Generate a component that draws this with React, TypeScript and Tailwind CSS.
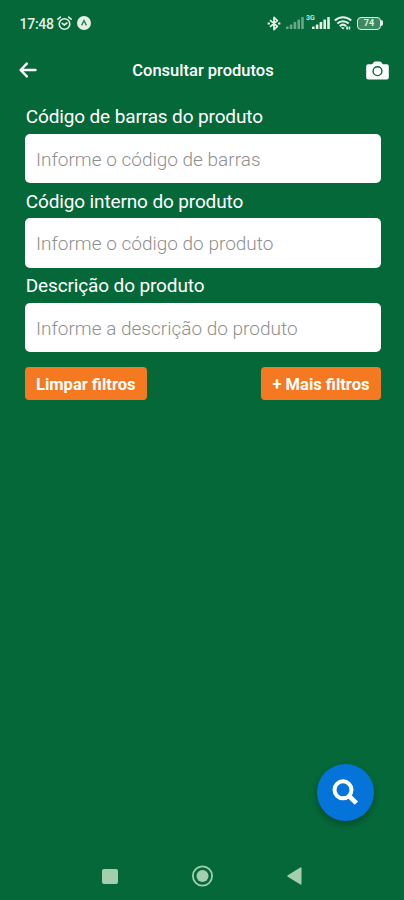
import type { ReactElement } from "react";

const fields = [
  {
    id: "barcode",
    label: "Código de barras do produto",
    placeholder: "Informe o código de barras",
  },
  {
    id: "code",
    label: "Código interno do produto",
    placeholder: "Informe o código do produto",
  },
  {
    id: "description",
    label: "Descrição do produto",
    placeholder: "Informe a descrição do produto",
  },
];

function Signal({ className }: { className: string }): ReactElement {
  return (
    <svg width="18" height="12" viewBox="0 0 18 12" fill="currentColor" className={className}>
      <rect x="0" y="9.5" width="2.6" height="2.5" rx="0.6" />
      <rect x="3.8" y="7.5" width="2.6" height="4.5" rx="0.6" />
      <rect x="7.6" y="5" width="2.6" height="7" rx="0.6" />
      <rect x="11.4" y="2.5" width="2.6" height="9.5" rx="0.6" />
      <rect x="15.2" y="0" width="2.6" height="12" rx="0.6" />
    </svg>
  );
}

function StatusBar(): ReactElement {
  return (
    <div className="flex h-[46px] items-center justify-between pl-[19.5px] pr-[21px] text-[#e4f1e6]">
      <div className="flex items-center">
        <span className="w-[37.5px] whitespace-nowrap pt-px text-[14px] font-medium leading-none tracking-[-0.25px]">
          17:48
        </span>
        <svg width="15" height="15" viewBox="0 0 15 15" fill="none" stroke="currentColor" strokeWidth="1.6" strokeLinecap="round">
          <circle cx="7.5" cy="8" r="5.3" />
          <path d="M.9 3.2 3.3 1.1M14.1 3.2 11.7 1.1M5.2 7.4l2.1 1.6 2.6-2" />
        </svg>
        <svg width="14" height="14" viewBox="0 0 14 14" className="ml-[5px]">
          <circle cx="7" cy="7" r="7" fill="currentColor" />
          <path d="M4.6 9.4 7 4.5 9.4 9.4" fill="none" stroke="#2d7d52" strokeWidth="1.4" />
        </svg>
      </div>
      <div className="flex items-center">
        <svg width="14" height="15" viewBox="0 0 14 15" fill="none" stroke="currentColor" strokeWidth="1.7" strokeLinejoin="round">
          <path d="M3 4.2 10.4 10.4 7 13.6V1.4l3.4 3.2L3 10.8" />
          <path d="M.6 7.5h2.4M11 7.5h2.4" strokeWidth="2.2" />
        </svg>
        <Signal className="ml-[5px] opacity-45" />
        <span className="-mt-[9px] ml-[2px] w-[8px] whitespace-nowrap text-[7px] font-medium leading-none">
          3G
        </span>
        <Signal className="-ml-[2px]" />
        <svg width="18" height="14" viewBox="0 0 18 14" fill="none" stroke="currentColor" strokeWidth="2.1" className="ml-[4px]">
          <path d="M.8 4.6C5.5.1 12.5.1 17.2 4.6M3.3 7.5c3.3-3.1 8.1-3.1 11.4 0M5.8 10.2c1.9-1.8 4.5-1.8 6.4 0" />
          <path d="M6.8 11 9 13.6l1.8-2zM12.2 10.4h1.8v3.2h-1.8zM14.6 10.4h1.6v3.2h-1.6z" fill="currentColor" stroke="none" />
        </svg>
        <div className="ml-[5px] flex items-center">
          <span className="flex h-[13px] w-[24px] items-center justify-center rounded-[4px] border-[1.5px] border-current bg-[#3b8960] text-[9px] font-bold leading-none">
            74
          </span>
          <span className="h-[6px] w-[2px] rounded-r-full bg-current" />
        </div>
      </div>
    </div>
  );
}

function Header(): ReactElement {
  return (
    <header className="flex h-[49px] items-center justify-between pl-[19px] pr-[15px]">
      <button aria-label="Voltar" className="-mt-[2px] w-[23px]">
        <svg width="18" height="16" viewBox="0 0 18 16" fill="none" stroke="currentColor" strokeWidth="2.4" strokeLinecap="round" strokeLinejoin="round">
          <path d="M16.5 8H2M7.8 1.6 1.6 8l6.2 6.4" />
        </svg>
      </button>
      <h1 className="-ml-[2px] whitespace-nowrap pt-[2px] text-[16.5px] font-medium leading-none">
        Consultar produtos
      </h1>
      <button aria-label="Câmera">
        <svg width="23" height="19" viewBox="0 0 23 19" fill="currentColor">
          <path d="M2.2 3.2h4l1.5-2Q8.3.4 9.3.4h4.4q1 0 1.6.8l1.5 2h4q2 0 2 2v11.4q0 2-2 2H2.2q-2 0-2-2V5.2q0-2 2-2z" />
          <circle cx="11.5" cy="10.2" r="4.4" fill="none" stroke="#056839" strokeWidth="1.4" />
        </svg>
      </button>
    </header>
  );
}

function NavigationBar(): ReactElement {
  return (
    <nav className="flex h-12 items-center pl-[102px] text-[#a3cfae]">
      <span className="h-[15px] w-4 rounded-[2px] bg-current" />
      <svg width="22" height="22" viewBox="0 0 22 22" fill="none" stroke="currentColor" className="ml-[74px]">
        <circle cx="10.5" cy="11" r="9.6" strokeWidth="1.8" />
        <circle cx="10.5" cy="11" r="6" fill="currentColor" stroke="none" />
      </svg>
      <svg width="15" height="18" viewBox="0 0 15 18" fill="currentColor" className="ml-[73px]">
        <path d="M.8 8.3 13.4.5q1.1-.5 1.1.7v15.6q0 1.2-1.1.7L.8 9.7q-1-.7 0-1.4z" />
      </svg>
    </nav>
  );
}

export default function App(): ReactElement {
  return (
    <div className="flex h-[900px] w-[404px] flex-col overflow-hidden bg-[#056839] font-['Roboto',sans-serif] text-white">
      <StatusBar />
      <Header />
      <main className="flex flex-1 flex-col pl-[25px] pr-[23px] pt-[3px]">
        {fields.map((field) => (
          <div key={field.id} className="flex h-[84.6px] flex-col">
            <label htmlFor={field.id} className="h-[35.5px] pl-[0.7px] text-[19px] leading-[38px] tracking-[-0.13px]">
              {field.label}
            </label>
            <input
              id={field.id}
              placeholder={field.placeholder}
              className="h-[49.5px] shrink-0 rounded-[5px] bg-white px-[11px] pt-[2px] text-[19px] font-light text-gray-800 outline-none placeholder:text-[#8f8f8f]"
            />
          </div>
        ))}
        <div className="mt-[15.5px] flex justify-between text-[16.5px] font-bold">
          <button className="h-[33px] w-[121.5px] whitespace-nowrap rounded-[4px] bg-[#f47920] pt-[3px]">
            Limpar filtros
          </button>
          <button className="h-[33px] w-[120px] whitespace-nowrap rounded-[4px] bg-[#f47920] pt-[3px]">
            + Mais filtros
          </button>
        </div>
        <button
          aria-label="Pesquisar"
          className="mb-[31px] mr-[7px] mt-auto flex size-[57px] items-center justify-center self-end rounded-full bg-[#0574da] shadow-[0_3px_6px_rgba(0,0,0,0.3)]"
        >
          <svg width="27" height="27" viewBox="0 0 27 27" fill="none" stroke="currentColor" strokeWidth="4">
            <circle cx="11" cy="10.8" r="8.5" />
            <path d="m17 17 7.4 7.2" strokeWidth="4.6" />
          </svg>
        </button>
      </main>
      <NavigationBar />
    </div>
  );
}
